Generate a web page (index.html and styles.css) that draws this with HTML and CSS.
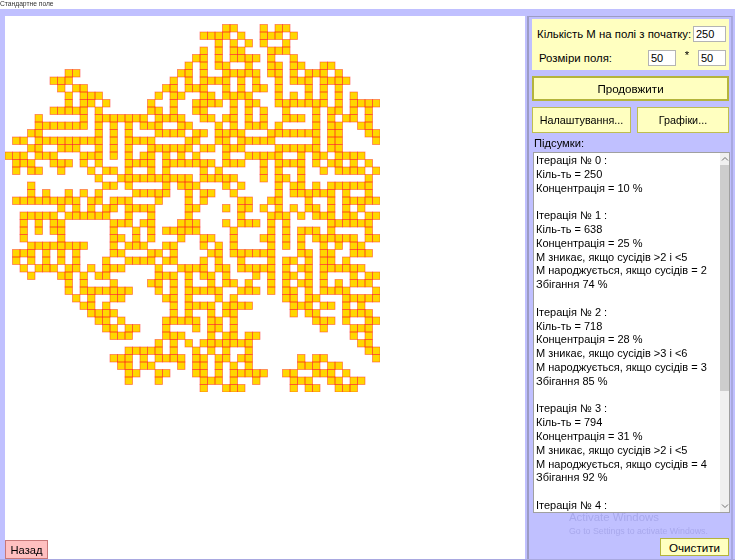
FILE: index.html
```html
<!DOCTYPE html>
<html lang="uk">
<head>
    <meta charset="UTF-8">
    <title>Стандартне поле</title>
    <link rel="stylesheet" href="styles.css">
</head>
<body>

    <div class="titlebar">Стандартне поле</div>

    <div class="window">
        <div class="field-pane">
            <svg id="field" class="field" width="375" height="375" viewBox="0 0 375 375"></svg>
            <button class="btn btn-back">Назад</button>
        </div>

        <div class="side">
            <div class="params">
                <div class="param-row param-row-first">
                    <label class="param-label" for="count">Кількість М на полі з початку:</label>
                    <input class="num num-wide" id="count" type="text" value="250">
                </div>
                <div class="param-row">
                    <label class="param-label param-label-size" for="width">Розміри поля:</label>
                    <input class="num" id="width" type="text" value="50">
                    <span class="times">*</span>
                    <input class="num" id="height" type="text" value="50">
                </div>
            </div>

            <button class="btn btn-go">Продовжити</button>

            <div class="btn-row">
                <button class="btn btn-small btn-settings">Налаштування...</button>
                <button class="btn btn-small btn-charts">Графіки...</button>
            </div>

            <div class="log-title">Підсумки:</div>

            <div class="log">
                <div class="log-text">Ітерація № 0 :
Кіль-ть = 250
Концентрація = 10 %

Ітерація № 1 :
Кіль-ть = 638
Концентрація = 25 %
М зникає, якщо сусідів &gt;2 і &lt;5
М народжується, якщо сусідів = 2
Збігання 74 %

Ітерація № 2 :
Кіль-ть = 718
Концентрація = 28 %
М зникає, якщо сусідів &gt;3 і &lt;6
М народжується, якщо сусідів = 3
Збігання 85 %

Ітерація № 3 :
Кіль-ть = 794
Концентрація = 31 %
М зникає, якщо сусідів &gt;2 і &lt;5
М народжується, якщо сусідів = 4
Збігання 92 %

Ітерація № 4 :</div>
                <div class="scrollbar">
                    <svg class="arrow" width="8" height="6" viewBox="0 0 8 6"><path d="M1 4.5 L4 1.5 L7 4.5" /></svg>
                    <div class="track"><div class="thumb"></div></div>
                    <svg class="arrow" width="8" height="6" viewBox="0 0 8 6"><path d="M1 1.5 L4 4.5 L7 1.5" /></svg>
                </div>
            </div>

            <div class="bottom-row">
                <button class="btn btn-clear">Очистити</button>
            </div>

            <div class="watermark">
                <div class="watermark-big">Activate Windows</div>
                <div class="watermark-small">Go to Settings to activate Windows.</div>
            </div>
        </div>
    </div>

    <script src="script.js"></script>
</body>
</html>
```

FILE: styles.css
```css
* {
    margin: 0;
    padding: 0;
    box-sizing: border-box;
}

body {
    width: 740px;
    height: 560px;
    overflow: hidden;
    background: #fff;
    font-family: 'Liberation Sans', Arial, sans-serif;
    font-size: 11.4px;
    color: #000;
}

.titlebar {
    height: 9px;
    font-size: 6.7px;
    line-height: 7px;
    color: #333;
    white-space: nowrap;
    overflow: hidden;
    filter: blur(0.3px);
}

.window {
    display: flex;
    width: 735px;
    height: 551px;
    padding: 7px 0 0 5px;
    background: #c0c0ff;
    border-bottom: 1px solid #a8a8e0;
}

.field-pane {
    display: flex;
    flex-direction: column;
    align-items: flex-start;
    width: 520px;
    background: #fff;
}

.field {
    display: block;
    margin-top: 1px;
}

.btn {
    flex: none;
    font-family: inherit;
    color: #000;
}

.btn-back {
    margin-top: auto;
    width: 43px;
    height: 19px;
    background: #ffc0c0;
    border: 1px solid #c87878;
    font-size: 11.2px;
    filter: blur(0.3px);
}

.side {
    position: relative;
    display: flex;
    flex-direction: column;
    width: 206px;
    margin-left: 2px;
    padding: 2px 0 0 3px;
    border-left: 2px solid #9c9cc4;
    border-top: 1px solid #9c9cc4;
    border-right: 2px solid #a8a8e0;
    filter: blur(0.3px);
}

.params {
    flex: none;
    width: 197px;
    height: 51px;
    padding: 7px 3px 0 5px;
    background: #ffffc0;
}

.param-row {
    display: flex;
    align-items: center;
    margin-top: 8px;
}

.param-row-first {
    margin-top: 0;
}

.param-label {
    white-space: nowrap;
}

.param-label-size {
    margin-left: 2px;
    margin-right: auto;
}

.param-row-first .param-label {
    margin-right: auto;
}

.num {
    width: 28px;
    height: 16px;
    padding-left: 2px;
    background: #fff;
    border: 1px solid #b4b4b4;
    font-family: inherit;
    font-size: 11px;
    color: #000;
    outline: none;
}

.num-wide {
    width: 33px;
}

.times {
    width: 22px;
    text-align: center;
    position: relative;
    top: -3px;
}

.btn-go {
    width: 197px;
    height: 25px;
    margin-top: 6px;
    background: #ffffc0;
    border: 2px solid #b4b43c;
    font-size: 11.6px;
}

.btn-row {
    display: flex;
    flex: none;
    justify-content: space-between;
    width: 197px;
    margin-top: 6px;
}

.btn-small {
    height: 26px;
    background: #ffffc0;
    border: 1px solid #bebe50;
    font-size: 10.8px;
}

.btn-settings {
    width: 99px;
}

.btn-charts {
    width: 92px;
}

.log-title {
    flex: none;
    height: 14px;
    margin-top: 3px;
    margin-left: 2px;
    font-size: 11.2px;
    line-height: 14px;
}

.log {
    display: flex;
    flex: none;
    width: 197px;
    height: 361px;
    margin-top: 2px;
    margin-left: 1px;
    background: #fff;
    border: 1px solid #a0a0a0;
}

.log-text {
    flex: 1;
    padding: 1px 0 0 2px;
    overflow: hidden;
    white-space: pre;
    font-size: 11px;
    line-height: 13.8px;
}

.scrollbar {
    display: flex;
    flex: none;
    flex-direction: column;
    align-items: center;
    width: 9px;
    background: #f0f0f0;
}

.arrow {
    flex: none;
    margin: 3px 0;
}

.arrow path {
    fill: none;
    stroke: #707070;
    stroke-width: 1;
}

.track {
    flex: 1;
    width: 100%;
}

.thumb {
    width: 100%;
    height: 226px;
    background: #cdcdcd;
}

.bottom-row {
    display: flex;
    flex: none;
    justify-content: flex-end;
    width: 197px;
    margin-top: 25px;
}

.btn-clear {
    width: 69px;
    height: 18px;
    background: #ffffc0;
    border: 1px solid #b4b43c;
    font-size: 11.6px;
}

/* windows watermark sits over the panel */
.watermark {
    position: absolute;
    left: 40px;
    top: 493px;
    color: #a8a8ec;
    white-space: nowrap;
    pointer-events: none;
}

.watermark-big {
    font-size: 11.4px;
    line-height: 15px;
}

.watermark-small {
    font-size: 8.8px;
    line-height: 12px;
}
```

FILE: script.js
```js
// Live cells of the 50x50 field, row by row, as column runs
var rows = [
    "",
    "29-30,34,36-37",
    "26-29,31,34-36,38",
    "28,30,32,34,37",
    "26,28,30-31,35-37",
    "25-26,28,30-33,35,38",
    "24,26,28-29,32,35-36,38-39,42-43",
    "8-9,23-24,26,29-33,35-36,38,40-42,44",
    "6-8,22,24,26-29,31,33,36,38-40,42-45",
    "7,9-10,21-22,24-26,29,31,33-34,36,40,42,44",
    "8,10-12,20,22-23,26-27,29-32,36,38,40,42,44,46",
    "8,10-11,13,19,22,25-28,30,32-33,36-42,44,46-49",
    "6-10,12,19-20,22,25-26,30,32,34,37,41,43-44,46,48",
    "4,10,12-18,20-23,26-27,29-30,32,34,37-39,41,43,45-46,48",
    "4-10,12,14,16,18-20,23-24,28,30,32-34,36,41,43-44,47-48",
    "3-4,12,14,16,20-23,25-26,28-31,35-41,43-44,48-49",
    "1-2,4-12,14,16-19,24-25,28-29,31-35,41,43-44,49",
    "3-4,7-9,12,14,16,19-24,26-27,29-31,36-41,43-44",
    "0-2,4-6,10-12,14,16,18-19,21,23,25,29,32-36,39,41-42,44-47",
    "1-3,6-8,10,12,16-19,21-27,29-31,34,36-39,41,43-44,46,48",
    "1,3-4,7,11,13-14,16,19,21,26,28,34,36,39,42,44-47,49",
    "12,15-24,26-30,34,36-37,39,48",
    "3,13-14,16,21,23-25,29,31,36,38-39,41,43-48",
    "3,5,8,10,12,17-21,24,26-27,30,36,38-43,45,48",
    "1-9,11-12,14-16,20,24,26,31-32,35-36,40,43,45-49",
    "7,9,11,13-14,16-19,24-25,29,31-32,34,36,38,40-41,43,45,47",
    "2-6,8-13,16,19,24,31,35-37,39,41-43,45-46,48-49",
    "2,4,6-7,14-16,18-19,23-25,29,31-33,35,37,43-48",
    "2,4,6-7,14,17,19,21-25,30,35,37,39-41,43,48",
    "2,7,14-15,17,19,23,26-27,30,34-35,37,39,41-46,48-49",
    "3-10,14,16-18,21-22,26,28,30,35,37,39,42,44,46-47",
    "1-3,5,7,9,14-15,19-20,22,27-28,30-35,39-40,42-43,46-48",
    "1,3,5,7,9,13,16-19,21-22,26,28,31,35,37-38,40,42-43,45",
    "2,4-6,8-9,11,13-15,20,23-26,28-29,31-35,37,39-40,42-47",
    "3,7-8,10,12-13,20-22,24,26-27,29,33,35,37-38,40,42,46,48-49",
    "8,10,14,19-20,22,24,27,29-30,32,35,37,39-40,42,44,46-48",
    "8,10-16,20,22,24-28,31-33,35,37-38,40,42-45,49",
    "9,11,14-15,21-22,24,28,30,37-38,40-41,45-49",
    "10-11,13,22,24-27,29-32,38-40,42-43,45,47",
    "11-14,22,24,27,29-30,38,40-41,45-48",
    "12-13,15,21-25,27-28,30,41-43,45,48-49",
    "13-14,16-17,21,25,27-28,30,42,46-48",
    "14-16,21-23,27,29-30,32-33,46,48",
    "20,22,24,26-32,47-48",
    "16-20,22,25,27,29,32,48-49",
    "14-16,18,20-23,25-26,28-29,31-32,39,41-42,49",
    "15-16,18-19,23,25-26,28,30,32,39-41,43-44",
    "16-17,20-21,25-26,28,30-34,37-38,41-43,45",
    "16,20,26-28,30,33,38-40,43-44,46-47",
    "26,29-31,38,40-41,44-46"
];

var CELL = 7.5;
var SVG_NS = "http://www.w3.org/2000/svg";
var field = document.getElementById("field");

function addCell(c, r, fill, stroke) {
    var rect = document.createElementNS(SVG_NS, "rect");
    rect.setAttribute("x", c * CELL);
    rect.setAttribute("y", r * CELL);
    rect.setAttribute("width", CELL);
    rect.setAttribute("height", CELL);
    rect.setAttribute("fill", fill);
    rect.setAttribute("stroke", stroke);
    if (stroke !== "none") {
        rect.setAttribute("stroke-opacity", "0.55");
        rect.setAttribute("stroke-width", "0.8");
    }
    field.appendChild(rect);
}

// walk the runs twice: fills first, then outlines so shared edges come out darker
["fill", "stroke"].forEach(function (pass) {
    rows.forEach(function (row, r) {
        if (!row) return;
        row.split(",").forEach(function (run) {
            var ends = run.split("-").map(Number);
            var last = ends.length > 1 ? ends[1] : ends[0];
            for (var c = ends[0]; c <= last; c++) {
                if (pass === "fill") addCell(c, r, "#ffd700", "none");
                else addCell(c, r, "none", "#ff2020");
            }
        });
    });
});
```
